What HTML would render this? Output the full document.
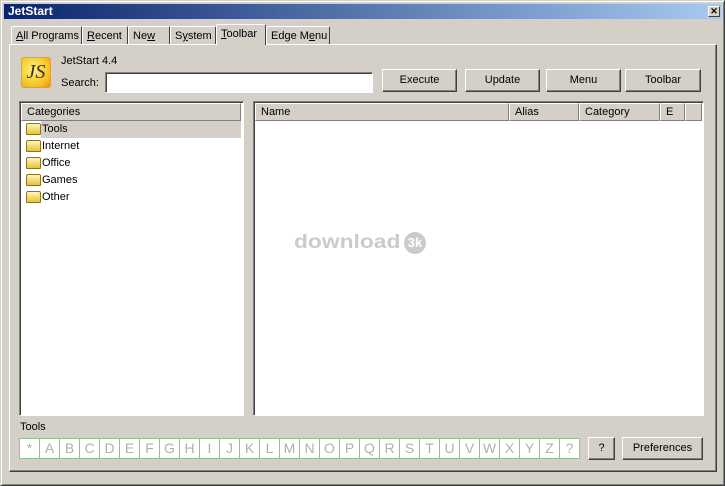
<!DOCTYPE html>
<html><head><meta charset="utf-8"><style>
*{box-sizing:border-box;margin:0;padding:0}
body{width:725px;height:486px;background:#d4d0c8;font-family:"Liberation Sans",sans-serif;font-size:11px;color:#000;position:relative;overflow:hidden}
.a{position:absolute;white-space:nowrap}
.win{left:0;top:0;width:725px;height:486px;border:1px solid;border-color:#d4d0c8 #404040 #404040 #d4d0c8;box-shadow:inset 1px 1px 0 #fff,inset -1px -1px 0 #808080}
.title{left:4px;top:4px;width:717px;height:15px;background:linear-gradient(90deg,#0a246a,#a6caf0);color:#fff;font-weight:bold;font-size:12px;padding-left:4px;line-height:15px}
.close{left:708px;top:6px;width:12px;height:11px;background:#d4d0c8;border:1px solid;border-color:#fff #404040 #404040 #fff;font-size:9px;line-height:9px;text-align:center;color:#000;font-weight:bold}
.tab{top:26px;height:19px;border:1px solid;border-color:#fff #404040 transparent #fff;border-bottom:none;border-radius:2px 2px 0 0;padding:3px 0 0 4px;font-size:11px;background:#d4d0c8;overflow:hidden}
.panel{left:9px;top:44px;width:708px;height:428px;border:1px solid;border-color:#fff #404040 #404040 #fff;box-shadow:inset -1px -1px 0 #808080}
.btn{height:23px;border:1px solid;border-color:#fff #404040 #404040 #fff;box-shadow:inset -1px -1px 0 #808080;text-align:center;line-height:21px;font-size:11px;background:#d4d0c8}
.sunk{border:1px solid;border-color:#808080 #fff #fff #808080;box-shadow:inset 1px 1px 0 #404040;background:#fff}
.hd{height:18px;border:1px solid;border-color:#fff #808080 #808080 #fff;background:#d4d0c8;padding-left:5px;line-height:17px;font-size:11px}
.item{height:17px;line-height:18px;padding-left:17px}
.fold{position:absolute;left:1px;top:3px;width:15px;height:12px;background:linear-gradient(#fff6b8,#e6c23c);border:1px solid #8a7420;border-radius:2px 2px 1px 1px}
.cell{top:438px;width:20px;height:21px;border:1px solid #8fc28f;border-left:none;background:#fff;color:#b0b0b0;text-align:center;line-height:19px;font-size:14px}
</style></head><body>
<div class="a win"></div>
<div class="a title">JetStart</div>
<div class="a close">✕</div>
<div class="a tab" style="left:11px;width:71px"><u>A</u>ll Programs</div>
<div class="a tab" style="left:82px;width:46px"><u>R</u>ecent</div>
<div class="a tab" style="left:128px;width:42px">Ne<u>w</u></div>
<div class="a tab" style="left:170px;width:46px">S<u>y</u>stem</div>
<div class="a tab" style="left:216px;width:50px;top:24px;height:21px;z-index:2"><u>T</u>oolbar</div>
<div class="a tab" style="left:266px;width:64px">Edge M<u>e</u>nu</div>
<div class="a panel"></div>
<div class="a" style="left:217px;top:44px;width:48px;height:2px;background:#d4d0c8;z-index:3"></div>
<div class="a" style="left:21px;top:57px;width:30px;height:31px;border-radius:3px;background:radial-gradient(circle at 40% 40%,#fff27a,#f4c020 70%,#e88a10);border:1px solid #e0a040;font-family:'Liberation Serif',serif;font-size:20px;color:#333;text-align:center;line-height:29px;font-style:italic">JS</div>
<div class="a" style="left:61px;top:55px">JetStart 4.4</div>
<div class="a" style="left:61px;top:77px">Search:</div>
<div class="a sunk" style="left:105px;top:72px;width:268px;height:21px"></div>
<div class="a btn" style="left:382px;top:69px;width:75px">Execute</div>
<div class="a btn" style="left:465px;top:69px;width:75px">Update</div>
<div class="a btn" style="left:546px;top:69px;width:75px">Menu</div>
<div class="a btn" style="left:625px;top:69px;width:76px">Toolbar</div>
<div class="a sunk" style="left:19px;top:101px;width:225px;height:315px"></div>
<div class="a hd" style="left:21px;top:103px;width:220px">Categories</div>
<div class="a" style="left:41px;top:121px;width:200px;height:17px;background:#d4d0c8"></div>
<div class="a item" style="top:120px;left:25px"><span class="fold"></span>Tools</div>
<div class="a item" style="top:137px;left:25px"><span class="fold"></span>Internet</div>
<div class="a item" style="top:154px;left:25px"><span class="fold"></span>Office</div>
<div class="a item" style="top:171px;left:25px"><span class="fold"></span>Games</div>
<div class="a item" style="top:188px;left:25px"><span class="fold"></span>Other</div>
<div class="a sunk" style="left:253px;top:101px;width:451px;height:315px"></div>
<div class="a hd" style="left:255px;top:103px;width:254px">Name</div>
<div class="a hd" style="left:509px;top:103px;width:70px">Alias</div>
<div class="a hd" style="left:579px;top:103px;width:81px">Category</div>
<div class="a hd" style="left:660px;top:103px;width:25px">E</div>
<div class="a hd" style="left:685px;top:103px;width:17px"></div>
<div class="a" style="left:294px;top:232px;font-size:19px;font-weight:bold;color:#cbcbcb;transform:scaleX(1.2);transform-origin:left">download</div>
<div class="a" style="left:404px;top:232px;width:22px;height:22px;border-radius:50%;background:#cbcbcb;color:#fff;font-size:13px;font-weight:bold;text-align:center;line-height:22px">3k</div>
<div class="a" style="left:20px;top:421px">Tools</div>
<div class="a" style="left:19px;top:438px;width:1px;height:21px;background:#8fc28f"></div>
<div class="a cell" style="left:20px">*</div><div class="a cell" style="left:40px">A</div><div class="a cell" style="left:60px">B</div><div class="a cell" style="left:80px">C</div><div class="a cell" style="left:100px">D</div><div class="a cell" style="left:120px">E</div><div class="a cell" style="left:140px">F</div><div class="a cell" style="left:160px">G</div><div class="a cell" style="left:180px">H</div><div class="a cell" style="left:200px">I</div><div class="a cell" style="left:220px">J</div><div class="a cell" style="left:240px">K</div><div class="a cell" style="left:260px">L</div><div class="a cell" style="left:280px">M</div><div class="a cell" style="left:300px">N</div><div class="a cell" style="left:320px">O</div><div class="a cell" style="left:340px">P</div><div class="a cell" style="left:360px">Q</div><div class="a cell" style="left:380px">R</div><div class="a cell" style="left:400px">S</div><div class="a cell" style="left:420px">T</div><div class="a cell" style="left:440px">U</div><div class="a cell" style="left:460px">V</div><div class="a cell" style="left:480px">W</div><div class="a cell" style="left:500px">X</div><div class="a cell" style="left:520px">Y</div><div class="a cell" style="left:540px">Z</div><div class="a cell" style="left:560px">?</div>
<div class="a btn" style="left:588px;top:437px;width:27px">?</div>
<div class="a btn" style="left:622px;top:437px;width:81px">Preferences</div>
</body></html>
